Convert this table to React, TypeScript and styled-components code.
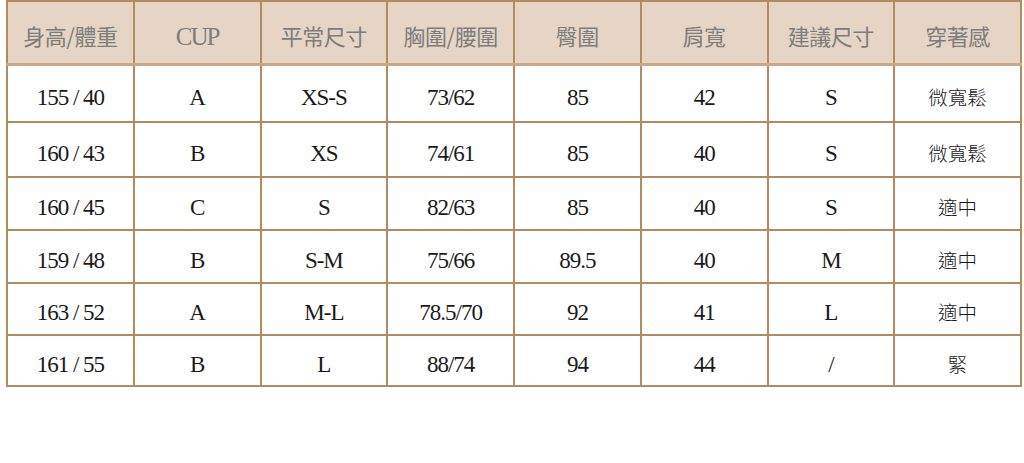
import React from "react";
import styled, { createGlobalStyle } from "styled-components";

const Global = createGlobalStyle`
  html, body { margin: 0; padding: 0; background: #ffffff; }
  body { font-family: "Liberation Serif", "Noto Sans CJK TC", serif; }
`;

const Page = styled.div`
  width: 1024px;
  height: 463px;
  padding: 0 2px 0 6px;
  box-sizing: border-box;
`;

const Table = styled.table`
  width: 1016px;
  border-collapse: collapse;
  table-layout: fixed;
  border: 2px solid #b38b62;
`;

const HeadCell = styled.th`
  height: 54px;
  background: #e6d5c5;
  border-left: 2px solid #b38b62;
  border-right: 2px solid #b38b62;
  border-bottom: 3px solid #c9a98b;
  color: #7d7d7d;
  font-weight: normal;
  text-align: center;
  vertical-align: middle;
  padding: 7px 0 0 0;
  line-height: 1;
`;

const HeadCjk = styled.span`
  font-family: "Noto Sans CJK TC", sans-serif;
  font-size: 22px;
  font-weight: 400;
  letter-spacing: -0.5px;
`;

const HeadLatin = styled.span`
  font-family: "Liberation Serif", serif;
  font-size: 25px;
  letter-spacing: -2px;
`;

const Cell = styled.td<{ $h: number }>`
  height: ${(p) => p.$h}px;
  border: 2px solid #b38b62;
  color: #1a1a1a;
  font-size: 23px;
  letter-spacing: -1px;
  font-family: "Liberation Serif", "Noto Sans CJK TC", serif;
  text-align: center;
  vertical-align: middle;
  padding: 7px 0 0 0;
  line-height: 1;
`;

const Cjk = styled.span`
  font-size: 19.5px;
  letter-spacing: 0;
  font-family: "Noto Sans CJK TC", serif;
  font-weight: 300;
`;

const headers = ["身高/體重", "CUP", "平常尺寸", "胸圍/腰圍", "臀圍", "肩寬", "建議尺寸", "穿著感"];

const rows: string[][] = [
  ["155 / 40", "A", "XS-S", "73/62", "85", "42", "S", "微寬鬆"],
  ["160 / 43", "B", "XS", "74/61", "85", "40", "S", "微寬鬆"],
  ["160 / 45", "C", "S", "82/63", "85", "40", "S", "適中"],
  ["159 / 48", "B", "S-M", "75/66", "89.5", "40", "M", "適中"],
  ["163 / 52", "A", "M-L", "78.5/70", "92", "41", "L", "適中"],
  ["161 / 55", "B", "L", "88/74", "94", "44", "/", "緊"],
];

const heights = [48, 46, 44, 44, 43, 42];

export default function App() {
  return (
    <>
      <Global />
      <Page>
        <Table>
          <thead>
            <tr>
              {headers.map((h) => (
                <HeadCell key={h}>
                  {h === "CUP" ? <HeadLatin>{h}</HeadLatin> : <HeadCjk>{h}</HeadCjk>}
                </HeadCell>
              ))}
            </tr>
          </thead>
          <tbody>
            {rows.map((r, i) => (
              <tr key={i}>
                {r.map((c, j) => (
                  <Cell key={j} $h={heights[i]}>
                    {j === 7 ? <Cjk>{c}</Cjk> : c}
                  </Cell>
                ))}
              </tr>
            ))}
          </tbody>
        </Table>
      </Page>
    </>
  );
}
